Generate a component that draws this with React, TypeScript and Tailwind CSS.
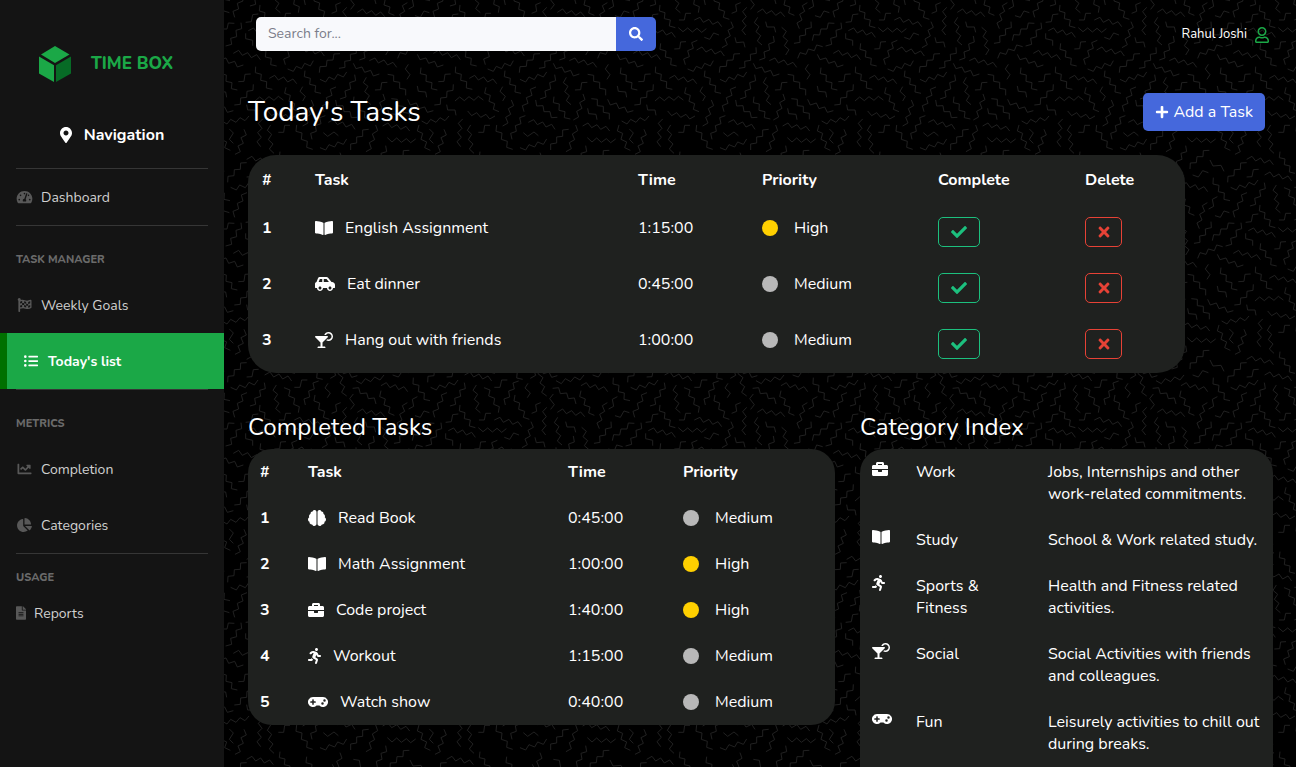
import type { ReactNode } from "react";
import type { IconType } from "react-icons";
import {
  FaBookOpen,
  FaBrain,
  FaBriefcase,
  FaCarSide,
  FaChartLine,
  FaChartPie,
  FaCheck,
  FaCocktail,
  FaFileAlt,
  FaFlagCheckered,
  FaGamepad,
  FaListUl,
  FaMapMarkerAlt,
  FaPlus,
  FaRegUser,
  FaRunning,
  FaSearch,
  FaTachometerAlt,
  FaTimes,
} from "react-icons/fa";

/* ---------- Background squiggles ---------- */

// x1, y1, x2, y2, number of segments, side of the first bend
type Squiggle = [number, number, number, number, number, 1 | -1];

const squiggles: Squiggle[] = [
  [45, -15, 88, 58, 6, 1], [95, 40, 122, 8, 3, 1], [160, -18, 152, 28, 3, 1],
  [172, 37, 254, 50, 6, -1], [140, 22, 137, 105, 6, 1], [173, 52, 186, 135, 6, 1],
  [197, 65, 227, 97, 3, 1], [245, 82, 257, 165, 6, -1], [220, 108, 178, 180, 6, -1],
  [105, 112, 135, 142, 3, 1], [93, 65, 66, 143, 6, -1], [-17, 60, 65, 80, 6, -1],
  [13, 112, 57, 105, 3, 1], [535, 83, 619, 86, 6, 1], [-10, 150, 73, 168, 6, -1],
  [58, 218, 120, 161, 6, -1], [168, 142, 117, 205, 6, -1], [563, 207, 640, 182, 6, 1],
  [15, 212, 63, 280, 6, 1], [60, 238, 140, 216, 6, 1], [160, 190, 238, 222, 6, 1],
  [208, 182, 290, 202, 6, -1], [293, 175, 368, 140, 6, -1], [325, 193, 321, 238, 3, 1],
  [333, 65, 282, 130, 6, -1], [337, 122, 403, 70, 6, -1], [243, -28, 283, 46, 6, 1],
  [322, 8, 298, 86, 6, 1], [352, -10, 326, 27, 3, 1], [345, 47, 388, 38, 3, 1],
  [441, -22, 404, 52, 6, 1], [493, -52, 450, 18, 6, -1], [437, 67, 475, 42, 3, 1],
  [480, 15, 526, 83, 6, 1], [445, 92, 526, 112, 6, -1], [423, 68, 377, 138, 6, -1],
  [437, 100, 458, 137, 3, 1], [400, 160, 481, 179, 6, -1], [352, 163, 430, 195, 6, 1],
  [482, 130, 530, 198, 6, 1], [523, 147, 558, 125, 3, 1], [529, -45, 541, 38, 6, 1],
  [552, -37, 595, 38, 6, -1], [537, 60, 573, 40, 3, 1], [592, 121, 556, 194, 6, 1],
  [467, 200, 517, 268, 6, 1], [508, 235, 590, 251, 6, -1], [415, 245, 452, 222, 3, 1],
  [363, 203, 412, 270, 6, 1], [352, 258, 380, 292, 3, 1], [460, 253, 403, 315, 6, -1],
  [465, 303, 550, 300, 6, -1], [558, 262, 597, 335, 6, 1], [8, 260, 8, 303, 3, 1],
  [34, 300, 8, 378, 6, -1], [108, 261, 72, 335, 6, 1], [164, 224, 120, 297, 6, -1],
  [199, 232, 213, 314, 6, 1], [225, 270, 262, 247, 3, 1], [263, 223, 317, 286, 6, -1],
  [162, 290, 211, 357, 6, 1], [107, 300, 172, 352, 6, 1], [249, 282, 220, 360, 6, -1],
  [274, 296, 328, 358, 6, -1], [263, 325, 291, 359, 3, 1], [323, 298, 400, 332, 6, 1],
  [365, 363, 447, 348, 6, 1], [440, 314, 468, 346, 3, 1], [503, 333, 585, 348, 6, 1],
  [488, 357, 482, 440, 6, 1], [512, 375, 522, 460, 6, 1], [535, 397, 570, 376, 3, 1],
  [357, 375, 391, 451, 6, 1], [388, 387, 400, 430, 3, -1], [432, 388, 405, 463, 6, -1],
  [85, 367, 165, 388, 6, -1], [70, 398, 115, 407, 3, 1], [76, 347, 36, 418, 6, 1],
  [248, 378, 329, 393, 6, -1], [262, 413, 347, 417, 6, 1], [152, 450, 206, 388, 6, -1],
  [227, 375, 198, 455, 6, -1], [60, 443, 140, 417, 6, 1], [590, 375, 638, 448, 6, 1],
  [257, 437, 215, 507, 6, -1], [270, 507, 328, 451, 6, -1], [120, 458, 91, 535, 6, -1],
  [123, 505, 140, 588, 6, 1], [97, 493, 172, 527, 6, 1], [168, 542, 252, 525, 6, 1],
  [243, 557, 323, 575, 6, -1], [278, 525, 325, 518, 3, 1], [340, 533, 390, 602, 6, 1],
  [383, 547, 440, 488, 6, -1], [392, 562, 474, 540, 6, 1], [440, 531, 476, 508, 3, 1],
  [494, 525, 575, 543, 6, -1], [583, 562, 622, 540, 3, 1], [56, 543, 16, 615, 6, 1],
  [84, 550, 82, 593, 3, 1], [158, 565, 228, 612, 6, -1], [440, 478, 520, 494, 6, -1],
  [20, 470, 68, 538, 6, 1], [330, 480, 372, 514, 3, 1], [540, 455, 585, 520, 6, 1],
  [160, 478, 200, 506, 3, -1],
];

function squigglePath([x1, y1, x2, y2, n, side]: Squiggle) {
  const dx = x2 - x1;
  const dy = y2 - y1;
  const length = Math.hypot(dx, dy);
  const px = (-dy / length) * side;
  const py = (dx / length) * side;
  const bend = 12;
  const points = Array.from({ length: n + 1 }, (_, i) => {
    const t = i / n;
    const offset = (i % 2 ? bend : 0) - (n % 2 ? bend * t : 0);
    return `${Math.round(x1 + dx * t + px * offset)} ${Math.round(y1 + dy * t + py * offset)}`;
  });
  return `M${points.join("L")}`;
}

const squigglesPath = squiggles.map(squigglePath).join("");
const neighbours = [-600, 0, 600].flatMap((x) => [-600, 0, 600].map((y) => [x, y]));

function Backdrop() {
  return (
    <svg aria-hidden="true" className="absolute inset-0 -z-10 h-full w-full">
      <defs>
        <pattern id="squiggles" x="100" y="0" width="200" height="200" patternUnits="userSpaceOnUse">
          <g transform="scale(0.33333)" fill="none" stroke="#202020" strokeWidth="3">
            {neighbours.map(([x, y]) => (
              <path key={`${x},${y}`} d={squigglesPath} transform={`translate(${x} ${y})`} />
            ))}
          </g>
        </pattern>
      </defs>
      <rect width="100%" height="100%" fill="#000000" />
      <rect width="100%" height="100%" fill="url(#squiggles)" />
    </svg>
  );
}

/* ---------- Sidebar ---------- */

function CubeLogo() {
  return (
    <svg aria-hidden="true" viewBox="0 0 32 36" className="h-9 w-8">
      <path d="M16 0 30.500 8.500 16 17 2 8.500Z" fill="#1ba847" />
      <path d="M0 10.500 15 19.200V36L0 27.500Z" fill="#1ba847" />
      <path d="M32 10.500 17 19.200V36L32 27.500Z" fill="#076b26" />
    </svg>
  );
}

function NavLink({ icon: Icon, children }: { icon: IconType; children: ReactNode }) {
  return (
    <a href="#" className="flex h-14 items-center gap-2 px-4 pt-0.5 text-[#d0d0d0]">
      <Icon className="mb-0.5 h-3.5 w-[17px] text-[#585858]" />
      {children}
    </a>
  );
}

function NavHeading({ children }: { children: ReactNode }) {
  return (
    <h2 className="px-4 pt-[26px] pb-[9px] text-[11px] leading-4 font-extrabold text-[#6a6a6a] uppercase">
      {children}
    </h2>
  );
}

function Divider() {
  return <hr className="mx-4 border-t border-[#363636]" />;
}

function Sidebar() {
  return (
    <nav className="w-56 shrink-0 bg-[#141414] text-sm">
      <a href="#" className="flex h-[118px] items-center gap-5 pt-2.5 pl-[39px] text-[17px] font-extrabold text-[#1ba847]">
        <CubeLogo />
        TIME BOX
      </a>
      <div className="flex h-[50px] items-start justify-center gap-3 pt-[5px] text-base font-bold text-white">
        <FaMapMarkerAlt className="mt-1 h-4 w-3" />
        Navigation
      </div>
      <Divider />
      <NavLink icon={FaTachometerAlt}>Dashboard</NavLink>
      <Divider />
      <NavHeading>Task Manager</NavHeading>
      <NavLink icon={FaFlagCheckered}>Weekly Goals</NavLink>
      <a
        href="#"
        aria-current="page"
        className="flex h-14 items-center gap-2.5 border-l-[7px] border-[#007000] bg-[#1ba847] pt-0.5 pl-[17px] font-bold text-white"
      >
        <FaListUl className="mb-0.5 size-3.5" />
        Today's list
      </a>
      <Divider />
      <NavHeading>Metrics</NavHeading>
      <NavLink icon={FaChartLine}>Completion</NavLink>
      <NavLink icon={FaChartPie}>Categories</NavLink>
      <Divider />
      <h2 className="px-4 pt-4 pb-[9px] text-[11px] leading-4 font-extrabold text-[#6a6a6a] uppercase">Usage</h2>
      <a href="#" className="flex h-9 items-center gap-2 px-4 pt-0.5 text-[#d0d0d0]">
        <FaFileAlt className="mb-0.5 h-3.5 w-2.5 text-[#585858]" />
        Reports
      </a>
    </nav>
  );
}

/* ---------- Tables ---------- */

type Glyph = { icon: IconType; width: string };
type Priority = "High" | "Medium";
type Task = { glyph: Glyph; name: string; time: string; priority: Priority };

const book: Glyph = { icon: FaBookOpen, width: "w-[18px]" };
const car: Glyph = { icon: FaCarSide, width: "w-5" };
const cocktail: Glyph = { icon: FaCocktail, width: "w-[18px]" };
const brain: Glyph = { icon: FaBrain, width: "w-[18px]" };
const briefcase: Glyph = { icon: FaBriefcase, width: "w-4" };
const runner: Glyph = { icon: FaRunning, width: "w-[13px]" };
const gamepad: Glyph = { icon: FaGamepad, width: "w-5" };

const todaysTasks: Task[] = [
  { glyph: book, name: "English Assignment", time: "1:15:00", priority: "High" },
  { glyph: car, name: "Eat dinner", time: "0:45:00", priority: "Medium" },
  { glyph: cocktail, name: "Hang out with friends", time: "1:00:00", priority: "Medium" },
];

const completedTasks: Task[] = [
  { glyph: brain, name: "Read Book", time: "0:45:00", priority: "Medium" },
  { glyph: book, name: "Math Assignment", time: "1:00:00", priority: "High" },
  { glyph: briefcase, name: "Code project", time: "1:40:00", priority: "High" },
  { glyph: runner, name: "Workout", time: "1:15:00", priority: "Medium" },
  { glyph: gamepad, name: "Watch show", time: "0:40:00", priority: "Medium" },
];

const categories: { glyph: Glyph; name: string; text: string }[] = [
  { glyph: briefcase, name: "Work", text: "Jobs, Internships and other work-related commitments." },
  { glyph: book, name: "Study", text: "School & Work related study." },
  { glyph: runner, name: "Sports & Fitness", text: "Health and Fitness related activities." },
  { glyph: cocktail, name: "Social", text: "Social Activities with friends and colleagues." },
  { glyph: gamepad, name: "Fun", text: "Leisurely activities to chill out during breaks." },
];

function GlyphIcon({ glyph: { icon: Icon, width } }: { glyph: Glyph }) {
  return <Icon className={`h-4 ${width}`} />;
}

function TaskName({ task }: { task: Task }) {
  return (
    <span className="flex items-center gap-3">
      <GlyphIcon glyph={task.glyph} />
      {task.name}
    </span>
  );
}

function PriorityLabel({ priority }: { priority: Priority }) {
  return (
    <span className="flex items-center gap-4">
      <span className={`size-4 rounded-full ${priority === "High" ? "bg-[#ffd000]" : "bg-[#b8b8b8]"}`} />
      {priority}
    </span>
  );
}

function TodaysTable() {
  return (
    <div className="mr-[88px] rounded-[28px] bg-[#1f211f]">
      <table className="w-full table-fixed text-left leading-[22px] [&_td]:pl-3.5 [&_td]:align-top [&_th]:pl-3.5 [&_th]:align-top">
        <colgroup>
          <col className="w-[53px]" />
          <col />
          <col className="w-[124px]" />
          <col className="w-[176px]" />
          <col className="w-[147px]" />
          <col className="w-[114px]" />
        </colgroup>
        <thead className="[&_th]:pt-3.5">
          <tr className="h-[50px]">
            <th>#</th>
            <th>Task</th>
            <th>Time</th>
            <th>Priority</th>
            <th>Complete</th>
            <th>Delete</th>
          </tr>
        </thead>
        <tbody className="[&_td]:pt-3 [&_th]:pt-3">
          {todaysTasks.map((task, i) => (
            <tr key={task.name} className="h-14">
              <th scope="row">{i + 1}</th>
              <td><TaskName task={task} /></td>
              <td>{task.time}</td>
              <td><PriorityLabel priority={task.priority} /></td>
              <td>
                <button
                  type="button"
                  aria-label={`Complete ${task.name}`}
                  className="flex h-[30px] w-[42px] items-center justify-center rounded-[5px] border border-[#1cc07e] text-[#1cc07e]"
                >
                  <FaCheck className="size-4" />
                </button>
              </td>
              <td>
                <button
                  type="button"
                  aria-label={`Delete ${task.name}`}
                  className="flex h-[30px] w-[37px] items-center justify-center rounded-[5px] border border-[#e74236] text-[#e74236]"
                >
                  <FaTimes className="size-4" />
                </button>
              </td>
            </tr>
          ))}
        </tbody>
      </table>
    </div>
  );
}

function CompletedTable() {
  return (
    <div className="rounded-[24px] bg-[#1f211f]">
      <table className="w-full table-fixed text-left leading-[22px] [&_td]:py-3 [&_td]:pl-3 [&_th]:py-3 [&_th]:pl-3">
        <colgroup>
          <col className="w-12" />
          <col />
          <col className="w-[115px]" />
          <col className="w-[164px]" />
        </colgroup>
        <thead>
          <tr>
            <th>#</th>
            <th>Task</th>
            <th>Time</th>
            <th>Priority</th>
          </tr>
        </thead>
        <tbody>
          {completedTasks.map((task, i) => (
            <tr key={task.name}>
              <th scope="row">{i + 1}</th>
              <td><TaskName task={task} /></td>
              <td>{task.time}</td>
              <td><PriorityLabel priority={task.priority} /></td>
            </tr>
          ))}
        </tbody>
      </table>
    </div>
  );
}

function CategoryTable() {
  return (
    <div className="rounded-t-[24px] bg-[#1f211f]">
      <table className="w-full table-fixed text-left leading-[22px] [&_td]:py-3 [&_td]:pl-3 [&_td]:align-top">
        <colgroup>
          <col className="w-11" />
          <col className="w-[132px]" />
          <col />
        </colgroup>
        <tbody>
          {categories.map(({ glyph, name, text }) => (
            <tr key={name}>
              <td><GlyphIcon glyph={glyph} /></td>
              <td className="pr-10">{name}</td>
              <td className="pr-2">{text}</td>
            </tr>
          ))}
        </tbody>
      </table>
    </div>
  );
}

/* ---------- Page ---------- */

export default function App() {
  return (
    <div className="relative isolate flex min-h-screen font-['Nunito','Lato',sans-serif] text-base text-white">
      <Backdrop />
      <Sidebar />
      <div className="min-w-0 flex-1 pr-[23px] pl-6">
        <header className="flex h-[68px] items-center justify-between pr-1 pl-2">
          <form role="search" className="flex h-[34px] w-[400px] overflow-hidden rounded-[5px]">
            <input
              type="search"
              aria-label="Search"
              placeholder="Search for..."
              className="min-w-0 flex-1 bg-[#f8f9fc] px-3 text-sm text-[#6e707e] outline-none placeholder:text-[#7b7d8a]"
            />
            <button type="button" aria-label="Search" className="flex w-10 items-center justify-center bg-[#4568dc]">
              <FaSearch className="size-3.5" />
            </button>
          </form>
          <a href="#" className="flex items-center gap-2 pt-px text-[13px]">
            Rahul Joshi
            <FaRegUser className="h-4 w-3.5 text-[#1ba847]" />
          </a>
        </header>
        <main>
          <div className="flex items-center justify-between pt-[25px] pr-2 pb-6">
            <h1 className="text-[28px] leading-[38px]">Today's Tasks</h1>
            <button type="button" className="flex h-[38px] items-center gap-1 rounded-[5px] bg-[#4568dc] px-3">
              <FaPlus className="size-3.5" />
              Add a Task
            </button>
          </div>
          <TodaysTable />
          <div className="grid grid-cols-[587fr_413fr] gap-[25px] pt-10">
            <section>
              <h2 className="pb-[7px] text-2xl leading-[29px]">Completed Tasks</h2>
              <CompletedTable />
            </section>
            <section>
              <h2 className="pb-[7px] text-2xl leading-[29px]">Category Index</h2>
              <CategoryTable />
            </section>
          </div>
        </main>
      </div>
    </div>
  );
}
